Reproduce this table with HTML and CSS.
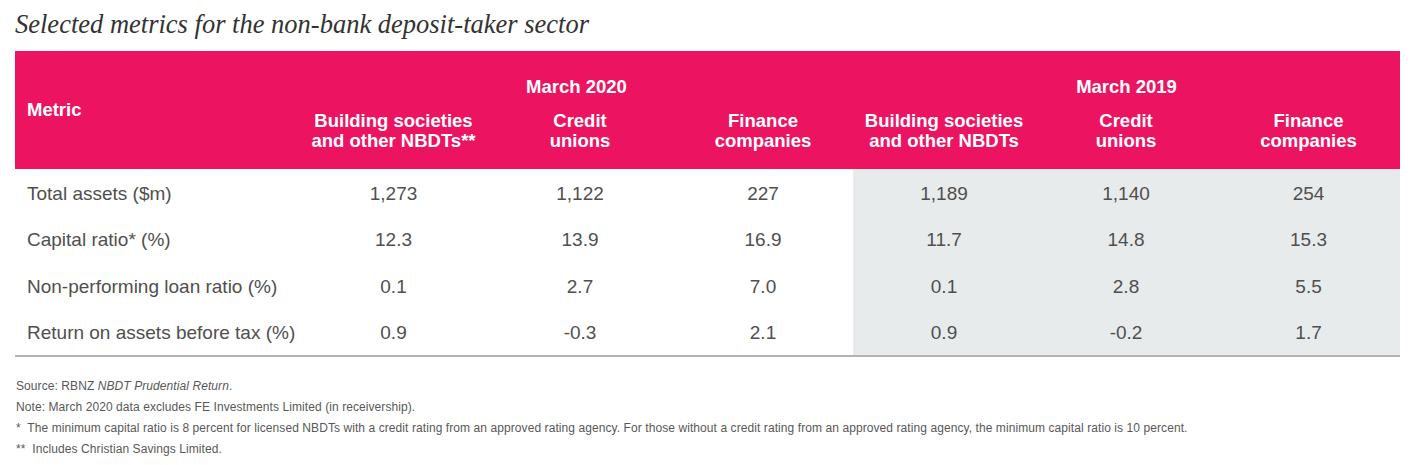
FILE: index.html
```html
<!DOCTYPE html>
<html lang="en">
<head>
<meta charset="utf-8">
<title>Selected metrics for the non-bank deposit-taker sector</title>
<link rel="stylesheet" href="styles.css">
</head>
<body>
<main class="page">
  <h1 class="title">Selected metrics for the non-bank deposit-taker sector</h1>
  <table class="metrics">
    <colgroup>
      <col class="c-metric">
      <col class="c-a"><col class="c-b"><col class="c-c">
      <col class="c-d"><col class="c-d"><col class="c-e">
    </colgroup>
    <thead>
      <tr class="period-row">
        <th class="metric-head" rowspan="2">Metric</th>
        <th class="period" colspan="3">March 2020</th>
        <th class="period" colspan="3">March 2019</th>
      </tr>
      <tr class="sector-row">
        <th class="sector">Building societies<br>and other NBDTs**</th>
        <th class="sector">Credit<br>unions</th>
        <th class="sector">Finance<br>companies</th>
        <th class="sector">Building societies<br>and other NBDTs</th>
        <th class="sector">Credit<br>unions</th>
        <th class="sector">Finance<br>companies</th>
      </tr>
    </thead>
    <tbody>
      <tr>
        <td class="label">Total assets ($m)</td>
        <td>1,273</td><td>1,122</td><td>227</td>
        <td class="prior">1,189</td><td class="prior">1,140</td><td class="prior">254</td>
      </tr>
      <tr>
        <td class="label">Capital ratio* (%)</td>
        <td>12.3</td><td>13.9</td><td>16.9</td>
        <td class="prior">11.7</td><td class="prior">14.8</td><td class="prior">15.3</td>
      </tr>
      <tr>
        <td class="label">Non-performing loan ratio (%)</td>
        <td>0.1</td><td>2.7</td><td>7.0</td>
        <td class="prior">0.1</td><td class="prior">2.8</td><td class="prior">5.5</td>
      </tr>
      <tr>
        <td class="label">Return on assets before tax (%)</td>
        <td>0.9</td><td>-0.3</td><td>2.1</td>
        <td class="prior">0.9</td><td class="prior">-0.2</td><td class="prior">1.7</td>
      </tr>
    </tbody>
  </table>
  <div class="notes">
    <p>Source: RBNZ <em>NBDT Prudential Return</em>.</p>
    <p>Note: March 2020 data excludes FE Investments Limited (in receivership).</p>
    <p>*&nbsp; The minimum capital ratio is 8 percent for licensed NBDTs with a credit rating from an approved rating agency. For those without a credit rating from an approved rating agency, the minimum capital ratio is 10 percent.</p>
    <p>**&nbsp; Includes Christian Savings Limited.</p>
  </div>
</main>
</body>
</html>
```

FILE: styles.css
```css
html, body {
  margin: 0;
  padding: 0;
  background: #ffffff;
}

body {
  font-family: "Liberation Sans", Arial, sans-serif;
}

.page {
  padding: 0 10px 0 15px;
}

.title {
  margin: 0 0 12px 0;
  padding-top: 10px;
  font-family: "Liberation Serif", "Times New Roman", serif;
  font-style: italic;
  font-weight: normal;
  font-size: 26.5px;
  line-height: 29px;
  color: #333333;
}

.metrics {
  width: 1385px;
  border-collapse: collapse;
  table-layout: fixed;
  border-bottom: 2px solid #b3b3b3;
}

.c-metric { width: 285px; }
.c-a { width: 187px; }
.c-b { width: 186px; }
.c-c { width: 180px; }
.c-d { width: 182px; }
.c-e { width: 183px; }

.metrics thead th {
  background: #ec1461;
  color: #ffffff;
  font-weight: bold;
  font-size: 18.5px;
  text-align: center;
  padding: 0;
}

.metrics thead th.period {
  padding-top: 25px;
  line-height: 22px;
  vertical-align: top;
}

.metrics thead th.sector {
  padding: 13px 0 18px;
  line-height: 20px;
  vertical-align: top;
}

.metrics thead th.metric-head {
  text-align: left;
  vertical-align: middle;
  padding-left: 12px;
  line-height: 22px;
}

.metrics tbody td {
  font-size: 19px;
  line-height: 22px;
  color: #4f4f4f;
  text-align: center;
  padding: 13.5px 0 11px;
}

.metrics tbody td.label {
  text-align: left;
  padding-left: 12px;
}

.metrics tbody td.prior {
  background: #e8ebeb;
}

.notes {
  margin-top: 19px;
  padding-left: 1px;
  color: #585858;
  font-size: 12px;
  letter-spacing: 0.08px;
  line-height: 21px;
}

.notes p {
  margin: 0;
}
```
